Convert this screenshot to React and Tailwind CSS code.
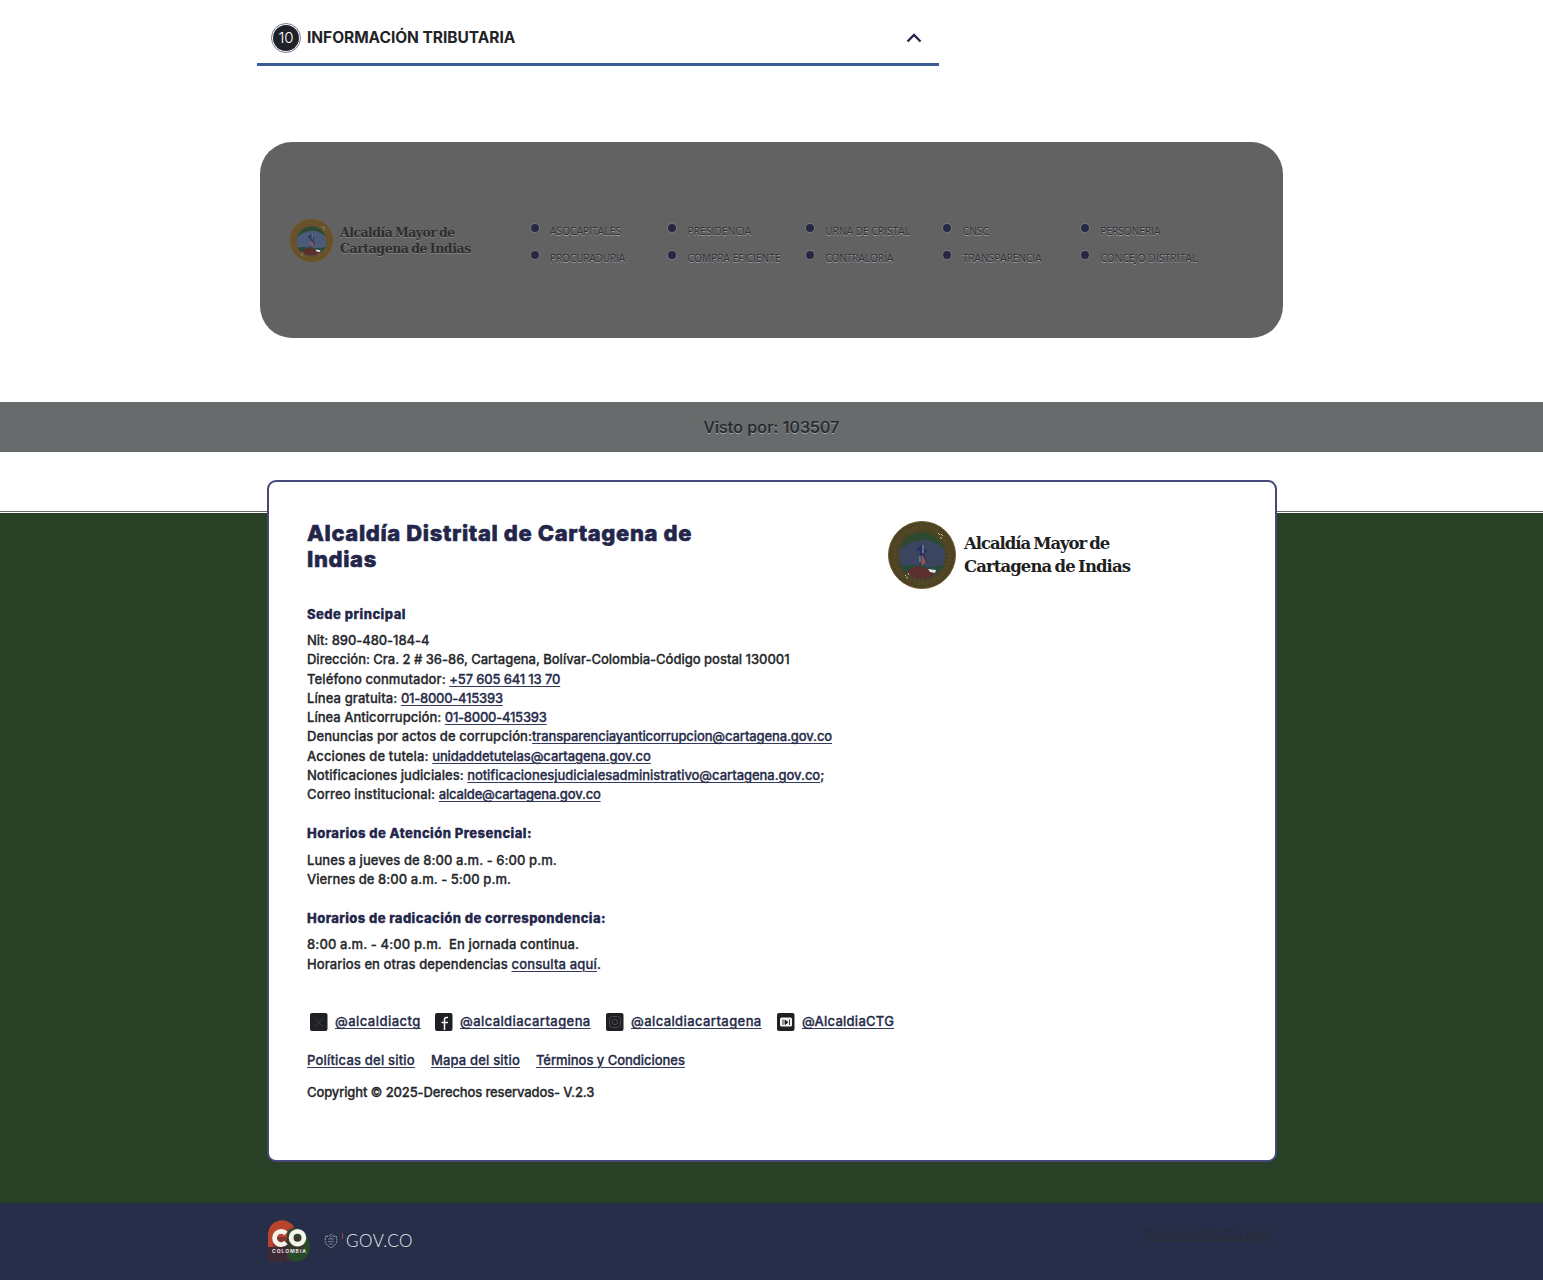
import React from "react";

const ENTITIES = [
  [["ASOCAPITALES", "tracking-[0.16px]"], ["PROCURADURIA", "tracking-[-0.07px]"]],
  [["PRESIDENCIA", "tracking-[0.2px]"], ["COMPRA EFICIENTE", "tracking-[0.13px]"]],
  [["URNA DE CRISTAL", "tracking-[0.12px]"], ["CONTRALORÍA", "tracking-[0.01px]"]],
  [["CNSC", "tracking-[0.1px]"], ["TRANSPARENCIA", "tracking-[0.07px]"]],
  [["PERSONERIA", "tracking-[0.06px]"], ["CONCEJO DISTRITAL", "tracking-[0.2px]"]],
];

const CONTACT = [
  ["Nit: 890-480-184-4", "tracking-[-0.06px]"],
  ["Dirección: Cra. 2 # 36-86, Cartagena, Bolívar-Colombia-Código postal 130001", "tracking-[-0.01px]"],
  ["Teléfono conmutador: ", "tracking-[0.09px]", "+57 605 641 13 70", "tracking-[-0.15px]"],
  ["Línea gratuita: ", "tracking-[0.1px]", "01-8000-415393", "tracking-[-0.24px]"],
  ["Línea Anticorrupción: ", "tracking-[0.03px]", "01-8000-415393", "tracking-[-0.24px]"],
  ["Denuncias por actos de corrupción:", "tracking-[0.09px]", "transparenciayanticorrupcion@cartagena.gov.co", "tracking-[-0.114px]"],
  ["Acciones de tutela: ", "tracking-[0.13px]", "unidaddetutelas@cartagena.gov.co", "tracking-[-0.09px]"],
  ["Notificaciones judiciales: ", "tracking-[0.04px]", "notificacionesjudicialesadministrativo@cartagena.gov.co", "tracking-[-0.05px]", ";"],
  ["Correo institucional: ", "tracking-[0.13px]", "alcalde@cartagena.gov.co", "tracking-[-0.18px]"],
];

function Link({ children, className = "" }) {
  return (
    <a className={`text-[#262b49] underline decoration-[#363b5e] decoration-1 underline-offset-2 ${className}`}>
      {children}
    </a>
  );
}

function Line({ children, className = "" }) {
  return <p className={`h-[19.3px] whitespace-pre leading-[19.3px] ${className}`}>{children}</p>;
}

function Subtitle({ children, className = "" }) {
  return (
    <h3 className={`h-5 whitespace-nowrap text-[13px] leading-5 font-extrabold text-[#23264a] ${className}`}>{children}</h3>
  );
}

function Seal({ className, ring, rim, sky }) {
  return (
    <svg viewBox="0 0 70 70" className={className}>
      <circle cx="35" cy="35" r="33.5" fill={ring} stroke={rim} strokeWidth="1" />
      <circle cx="35" cy="35" r="28" fill="none" stroke={rim} strokeWidth="4" strokeDasharray="2 2.2" opacity=".3" />
      <circle cx="35" cy="36" r="23" fill={sky} />
      <path d="M13 29a23 23 0 0 1 44 0q-11-10-22-9t-22 9z" fill="#2c4a31" />
      <path d="M13 46q11-2 22 0t22-1a23 23 0 0 1-8 9H20a23 23 0 0 1-7-8z" fill="#284a3d" />
      <path d="M19 53q8-9 16-6t15 6q-15 11-31 0z" fill="#5a2f2c" />
      <path d="M34 46V27l-4 4m4-4 5 5m-3 1 3 9" fill="none" stroke="#27315c" strokeWidth="2.2" />
      <path d="m35 34 4 8-5 4z" fill="#92584a" />
      <path d="M36 25v8M33 36v6" stroke="#8f9ec4" strokeWidth="1" />
      <path d="m41 49 8 1-1 3-5-1z" fill="#dfe6ea" />
      <path d="m51 13 2 2m1-1 2 2m-3 1 2 2m-37 36 1 1m2-3 1 2m-3 2 2 1" stroke="#d9d3ab" strokeWidth=".9" />
    </svg>
  );
}

const Box = ({ children }) => (
  <svg viewBox="0 0 20 20" className="size-5 shrink-0">
    <rect x="1" y="1" width="17.5" height="18" rx="2" fill="#1f2023" />
    {children}
  </svg>
);

const SOCIAL = [
  ["@alcaldiactg", "tracking-[0.45px]", "w-[125px]",
    <path d="m6 6 8 9M14 6l-8 9" stroke="#343438" strokeWidth="1.2" />],
  ["@alcaldiacartagena", "tracking-[0.4px]", "w-[171px]",
    <path d="M14 5.5h-1.5q-2 0-2 2V18M7.5 10.5H14" fill="none" stroke="#f5f5f5" strokeWidth="1.5" />],
  ["@alcaldiacartagena", "tracking-[0.4px]", "w-[171px]",
    <g fill="none" stroke="#4a4a4e" strokeWidth="1"><rect x="4.5" y="4.5" width="11" height="11" rx="3" /><circle cx="10" cy="10" r="2.7" /></g>],
  ["@AlcaldiaCTG", "tracking-[0.25px]", "w-[120px]",
    <g><rect x="4" y="5.5" width="12" height="9" rx="1.5" fill="#f4f4f4" /><path d="M7 7.5v5.5M13.5 7.5v5.5M9 8l3 2.3-3 2.2z" fill="#1f2023" stroke="#1f2023" strokeWidth=".9" /></g>],
];

export default function App() {
  return (
    <div className="h-[1280px] w-[1543px] overflow-hidden bg-white font-['Inter',sans-serif] text-[13px] text-[#25272b]">
      <section className="ml-[257px] flex h-[66px] w-[682px] items-center border-b-[3px] border-[#3c5c93] pt-[13px] pr-4 pl-[14px]">
        <span className="flex size-[30px] items-center justify-center rounded-full border border-[#777a90] bg-white p-px">
          <span className="flex size-[26px] items-center justify-center rounded-full bg-[#1f2129] text-[15px] font-light text-white">10</span>
        </span>
        <h2 className="ml-[6px] text-[15.5px] font-bold tracking-[-0.04px] text-[#222327]">INFORMACIÓN TRIBUTARIA</h2>
        <svg viewBox="0 0 18 12" className="-mt-px ml-auto h-3 w-[18px]">
          <path d="m2.5 9.5 6.5-6.5 6.5 6.5" fill="none" stroke="#24264a" strokeWidth="2.3" />
        </svg>
      </section>

      <section className="mt-[76px] ml-[260px] flex h-[196px] w-[1023px] items-center rounded-[32px] bg-[#626262] pl-[29px]">
        <Seal className="size-[45px]" ring="#68512a" rim="#75602f" sky="#4b5b78" />
        <div className="mt-px ml-[6px] w-[190px] font-['DejaVu_Serif',serif] text-[12.5px] leading-4 font-bold whitespace-nowrap text-[#2d2d2d] [text-shadow:0_1px_0_#818181] [word-spacing:-1.2px]">
          <p className="tracking-[-0.53px]">Alcaldía Mayor de</p>
          <p className="tracking-[-0.43px]">Cartagena de Indias</p>
        </div>
        <div className="mt-[9px] flex">
          {ENTITIES.map((column, i) => (
            <ul key={i} className="w-[137.6px]">
              {column.map(([name, tracking]) => (
                <li key={name} className="flex h-[27px] items-center">
                  <span className="-mt-[6px] ml-[0.5px] size-2 rounded-full bg-[#272944] ring-1 ring-[#77777b]" />
                  <span className={`mt-px ml-[11.5px] font-['Open_Sans',sans-serif] text-[10px] whitespace-nowrap text-[#2d2d35] [text-shadow:0_1px_0_#a0a0a0] ${tracking}`}>
                    {name}
                  </span>
                </li>
              ))}
            </ul>
          ))}
        </div>
      </section>

      <section className="mt-16 flex h-[50px] items-center justify-center bg-[#676b6c] text-[16px] font-medium tracking-[0.11px] text-[#25272b]">
        <p className="[-webkit-text-stroke:0.2px] [text-shadow:0_1px_0_#a5a7a8]">Visto por: 103507</p>
      </section>

      <div className="mt-[59px] h-px bg-[#666c66]" />

      <footer className="mt-px h-[690px] bg-[#284126]">
        <div className="relative -top-[33px] ml-[267px] h-[682px] w-[1010px] rounded-[9px] border-2 border-[#46487a] bg-white pt-[38px] pl-[38px] font-medium [-webkit-text-stroke:0.3px]">
          <div className="flex h-[70px]">
            <h2 className="w-[580px] text-[22px] leading-[26px] font-extrabold text-[#23264a] [-webkit-text-stroke:0.6px]">
              <span className="tracking-[0.63px]">Alcaldía Distrital de Cartagena de</span>
              <br />
              <span className="tracking-[0.65px]">Indias</span>
            </h2>
            <Seal className="size-[70px] shrink-0" ring="#4b4324" rim="#6f5d27" sky="#3b4560" />
            <div className="mt-[12px] ml-[7px] font-['DejaVu_Serif',serif] text-[16.5px] leading-[23px] font-bold whitespace-nowrap text-[#1f1f1f] [-webkit-text-stroke:0] [word-spacing:-1.5px]">
              <p className="tracking-[-1.07px]">Alcaldía Mayor de</p>
              <p className="tracking-[-0.92px]">Cartagena de Indias</p>
            </div>
          </div>

          <Subtitle className="mt-[14px] tracking-[0.48px]">Sede principal</Subtitle>
          <div className="mt-[7px]">
            {CONTACT.map(([label, tracking, link, linkTracking, after]) => (
              <Line key={label}>
                <span className={tracking}>{label}</span>
                {link && <Link className={linkTracking}>{link}</Link>}
                {after}
              </Line>
            ))}
          </div>

          <Subtitle className="mt-[18px] tracking-[0.455px]">Horarios de Atención Presencial:</Subtitle>
          <div className="mt-[8px]">
            <Line className="tracking-[0.08px]">Lunes a jueves de 8:00 a.m. - 6:00 p.m.</Line>
            <Line className="tracking-[0.06px]">Viernes de 8:00 a.m. - 5:00 p.m.</Line>
          </div>

          <Subtitle className="mt-[19px] tracking-[0.423px]">Horarios de radicación de correspondencia:</Subtitle>
          <div className="mt-[7px]">
            <Line className="tracking-[0.13px]">{"8:00 a.m. - 4:00 p.m.\u00a0 En jornada continua."}</Line>
            <Line>
              <span className="tracking-[0.08px]">{"Horarios en otras dependencias "}</span>
              <Link className="tracking-[0.17px]">consulta aquí</Link>.
            </Line>
          </div>

          <div className="mt-[38px] ml-[2px] flex h-5">
            {SOCIAL.map(([name, tracking, width, glyph], i) => (
              <div key={i} className={`flex items-center ${width}`}>
                <Box>{glyph}</Box>
                <Link className={`ml-[6px] ${tracking}`}>{name}</Link>
              </div>
            ))}
          </div>

          <nav className="mt-[18px] flex h-5 gap-4 leading-5">
            <Link className="tracking-[0.2px]">Políticas del sitio</Link>
            <Link className="tracking-[0.18px]">Mapa del sitio</Link>
            <Link className="tracking-[-0.04px]">Términos y Condiciones</Link>
          </nav>
          <p className="mt-3 leading-5 tracking-[-0.13px]">Copyright © 2025-Derechos reservados- V.2.3</p>
        </div>
      </footer>

      <section className="flex h-[77px] items-center bg-[#262e49] pb-[2px] pl-[267px]">
        <svg viewBox="0 0 44 44" className="size-11">
          <path d="M1 15A14 14 0 0 1 27 8L18 25 1 34z" fill="#b9432b" />
          <path d="M1 28h25v15H3q-2 0-2-3z" fill="#3e2a36" />
          <path d="M20 12q5-4 10-3l7 4q6 7 6 17a14 14 0 0 1-23 9z" fill="#294b2b" />
          <path d="M6 18h30v16H6z" fill="#472832" opacity=".5" />
          <g fill="none" stroke="#f5f5eb" strokeWidth="4.8">
            <path d="M19 14.5a6.6 6.6 0 1 0 0 9" />
            <circle cx="30.5" cy="18.7" r="6.4" />
          </g>
          <text x="5" y="34" fontSize="5" fontWeight="700" textLength="34" fill="#e6e6e6" fontFamily="Inter, sans-serif">COLOMBIA</text>
        </svg>
        <svg viewBox="0 0 22 18" className="ml-[13px] h-[18px] w-[22px]">
          <path d="M2 4q3 1 5-2 2 3 5 2 2 6-1 9l-4 3-4-3q-3-4-1-9z" fill="none" stroke="#a6b3b7" strokeWidth=".9" strokeDasharray="2 .8" />
          <path d="M4 7h6M4 9.5h6M5 12h4M7 4v3" stroke="#82909b" strokeWidth=".8" />
          <path d="M18.5 1v6" stroke="#94404c" strokeWidth="1.2" />
        </svg>
        <span className="font-['Lato',sans-serif] text-[17px] font-light tracking-[0.55px] text-[#e7e9ef]">GOV.CO</span>
        <a className="mt-[-13px] mr-[271px] ml-auto text-[12px] font-medium tracking-[0.4px] text-[#2b2b36] underline decoration-2">Conoce GOV.CO aquí</a>
      </section>
    </div>
  );
}
